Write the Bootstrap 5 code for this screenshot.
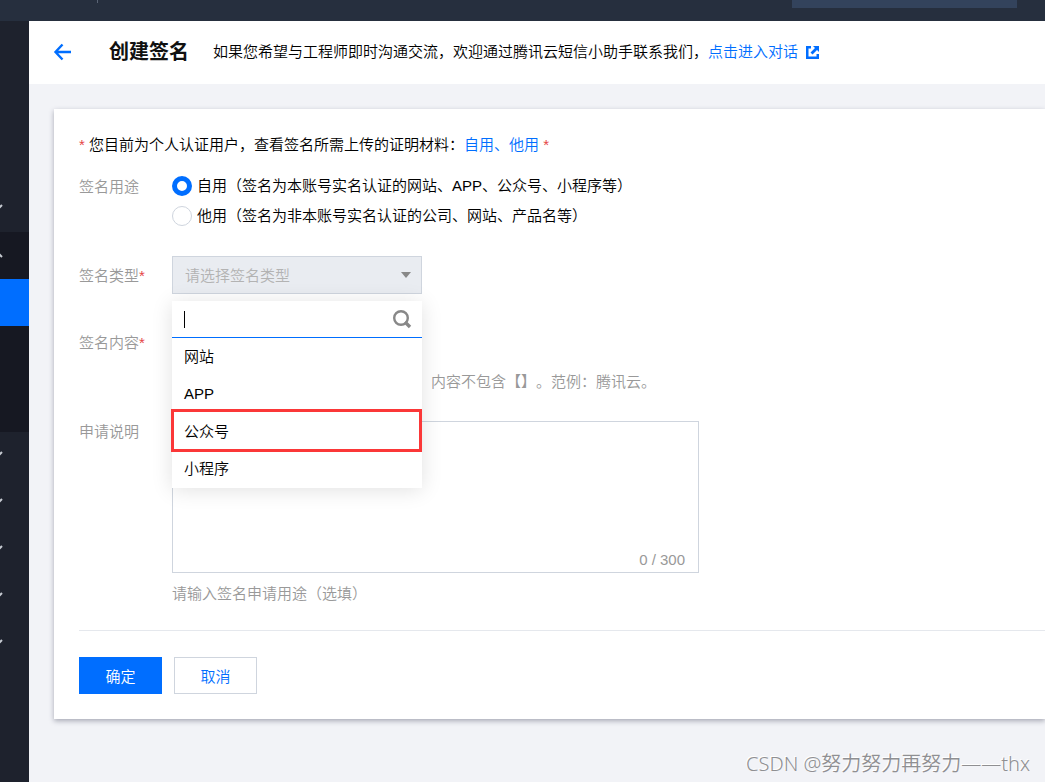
<!DOCTYPE html>
<html lang="zh-CN">
<head>
<meta charset="utf-8">
<meta name="viewport" content="width=device-width, initial-scale=1">
<title>创建签名</title>
<link href="https://cdn.jsdelivr.net/npm/bootstrap@5.3.0/dist/css/bootstrap.min.css" rel="stylesheet">
<style>
  :root { --brand: #006eff; --line: #cfd5de; --hint: #999; }
  body { font: 350 15px/22px "Liberation Sans", "Noto Sans CJK SC", sans-serif; color: #000; background: #f2f3f7; text-spacing-trim: space-all; }
  a { color: var(--brand); text-decoration: none; }
  .topbar { height: 21px; background: #262f3e; padding-right: 28px; }
  .topbar-sep { width: 1px; height: 3px; margin-left: 97px; background: #5a6475; }
  .topbar-search { width: 225px; height: 8px; background: #33435c; }
  .rail { width: 29px; padding-top: 164px; background: #1e222d; }
  .rail-item { display: block; height: 47px; line-height: 0; padding-top: 18px; }
  .rail-open { background: #161822; height: 200px; }
  .rail-open .rail-current { background: var(--brand); }
  .page-head { height: 63px; background: #fff; padding: 0 0 1px 24px; }
  .page-head h1 { font-size: 20px; line-height: 28px; font-weight: 700; margin: 0 24px 0 36px; color: #111; }
  .panel { margin: 25px 0 0 25px; padding: 25px 0 25px 25px; background: #fff; box-shadow: 0 2px 5px rgba(54, 58, 80, .4); }
  .req { color: #e54545; }
  .field { display: flex; }
  .field-gap { margin-top: 29px; }
  .field-gap-sm { margin-top: 15px; }
  .field-gap-md { margin-top: 25px; }
  .field-name { width: 93px; flex: none; color: var(--hint); }
  .field-name.beside-box { padding-top: 9px; }
  .field-name.beside-pick { padding-top: 5px; }
  .pick { height: 30px; gap: 5px; }
  .pick input { appearance: none; width: 20px; height: 20px; margin: 0; border: 1px solid var(--line); border-radius: 50%; background: #fff; }
  .pick input:checked { border: 5px solid var(--brand); }
  .ctl { width: 250px; height: 38px; font: inherit; border: 1px solid var(--line); border-radius: 0; padding: 1px 12px 0; display: block; }
  select.ctl { appearance: none; background: #e9ecf1; color: #b3b3b3; opacity: 1; }
  .arrow { right: 10px; top: 15px; }
  .menu { position: absolute; z-index: 5; top: 45px; left: 0; width: 250px; background: #fff; box-shadow: 0 2px 20px rgba(0, 0, 0, .12); }
  .menu-search { height: 37px; border-bottom: 1px solid var(--brand); padding: 0 10px 0 12px; }
  .menu-search input { border: 0; outline: 0; min-width: 0; height: 34px; padding: 0; caret-color: transparent; background: none; }
  .caret-bar { width: 1px; height: 17px; background: #000; }
  .menu-list { height: 150px; }
  .menu-list button { flex: 1; border: 0; background: none; text-align: left; padding: 0 12px; font: inherit; color: #000; position: relative; }
  .menu-list .picked::after { content: ""; position: absolute; inset: -4px 0 -1px -1px; border: 3px solid #fb3738; }
  .hint { color: var(--hint); margin: 10px 0 0; }
  .hint.past-menu { padding-left: 259px; margin-bottom: -1px; }
  .memo { width: 527px; max-width: 100%; }
  .memo textarea { display: block; width: 100%; height: 152px; resize: none; border: 1px solid var(--line); padding: 8px 12px; }
  .memo-count { position: absolute; right: 14px; bottom: 2px; color: var(--hint); }
  .actions { margin-top: 25px; border-top: 1px solid #e5e8ed; padding-top: 26px; gap: 12px; }
  .actions .btn { width: 83px; height: 37px; padding: 2px 0 0; border-radius: 0; font: inherit; }
  .actions .btn-ok { background: var(--brand); color: #fff; border: 1px solid var(--brand); }
  .actions .btn-no { background: #fff; color: var(--brand); border: 1px solid var(--line); }
  .stamp { margin: 31px 15px 3px; font-family: "Noto Sans", "Noto Sans CJK SC", sans-serif; font-size: 20px; line-height: 28px; color: #8f8f92; text-shadow: -1px -1px 0 #fff; }
</style>
</head>
<body>
<div class="d-flex flex-column min-vh-100">
  <header class="topbar d-flex justify-content-between align-items-start">
    <div class="topbar-sep"></div>
    <div class="topbar-search"></div>
  </header>
  <div class="d-flex flex-grow-1">
    <nav class="rail flex-shrink-0" aria-label="侧边导航">
      <a class="rail-item" href="#" aria-label="展开"><svg width="4" height="8" viewBox="8 0 4 8"><path d="M2 2l4 4 4-4" fill="none" stroke="#c5c9d0" stroke-width="2"/></svg></a>
      <div class="rail-open">
        <a class="rail-item" href="#" aria-label="收起"><svg width="4" height="8" viewBox="8 0 4 8"><path d="M2 7l4-4 4 4" fill="none" stroke="#c5c9d0" stroke-width="2"/></svg></a>
        <a class="rail-item rail-current" href="#" aria-label="当前页"></a>
      </div>
      <a class="rail-item" href="#" aria-label="展开"><svg width="4" height="8" viewBox="8 0 4 8"><path d="M2 2l4 4 4-4" fill="none" stroke="#c5c9d0" stroke-width="2"/></svg></a>
      <a class="rail-item" href="#" aria-label="展开"><svg width="4" height="8" viewBox="8 0 4 8"><path d="M2 2l4 4 4-4" fill="none" stroke="#c5c9d0" stroke-width="2"/></svg></a>
      <a class="rail-item" href="#" aria-label="展开"><svg width="4" height="8" viewBox="8 0 4 8"><path d="M2 2l4 4 4-4" fill="none" stroke="#c5c9d0" stroke-width="2"/></svg></a>
      <a class="rail-item" href="#" aria-label="展开"><svg width="4" height="8" viewBox="8 0 4 8"><path d="M2 2l4 4 4-4" fill="none" stroke="#c5c9d0" stroke-width="2"/></svg></a>
      <a class="rail-item" href="#" aria-label="展开"><svg width="4" height="8" viewBox="8 0 4 8"><path d="M2 2l4 4 4-4" fill="none" stroke="#c5c9d0" stroke-width="2"/></svg></a>
    </nav>

    <main class="flex-grow-1 d-flex flex-column">
      <div class="page-head d-flex align-items-center">
        <a href="#" class="d-flex" aria-label="返回"><svg width="20" height="18" viewBox="0 0 20 18"><path d="M9.500 1.500L2.500 9l7 7.500M2.500 9H18" fill="none" stroke="#006eff" stroke-width="2.400"/></svg></a>
        <h1>创建签名</h1>
        <div>如果您希望与工程师即时沟通交流，欢迎通过腾讯云短信小助手联系我们，<a href="#">点击进入对话</a></div>
        <a href="#" class="d-flex ms-2" aria-label="新窗口打开"><svg width="13" height="13" viewBox="0 0 13 13"><path d="M5 1.250H1.250v10.500h10.500V8" fill="none" stroke="#006eff" stroke-width="2.500"/><path d="M7 0h6v6l-2-2-4.500 4.500-2-2L9 2z" fill="#006eff"/></svg></a>
      </div>

      <form class="panel">
        <div><span class="req">*</span> 您目前为个人认证用户，查看签名所需上传的证明材料：<a href="#">自用</a><a href="#">、</a><a href="#">他用</a> <span class="req">*</span></div>

        <div class="field field-gap-sm" role="radiogroup" aria-labelledby="use">
          <div class="field-name beside-pick" id="use">签名用途</div>
          <div>
            <label class="pick d-flex align-items-center"><input type="radio" name="use" checked>自用（签名为本账号实名认证的网站、APP、公众号、小程序等）</label>
            <label class="pick d-flex align-items-center"><input type="radio" name="use">他用（签名为非本账号实名认证的公司、网站、产品名等）</label>
          </div>
        </div>

        <div class="field field-gap-md">
          <label class="field-name beside-box" for="kind">签名类型<span class="req">*</span></label>
          <div class="position-relative">
            <select class="ctl" id="kind" disabled><option>请选择签名类型</option></select>
            <svg class="arrow position-absolute" width="12" height="8" viewBox="0 0 12 8"><path d="M1 1h10L6 7z" fill="#888"/></svg>
            <div class="menu">
              <div class="menu-search d-flex align-items-center">
                <span class="caret-bar"></span>
                <input class="flex-grow-1" type="text" aria-label="搜索">
                <svg width="20" height="20" viewBox="0 0 20 20" fill="none" stroke="#888"><circle cx="9" cy="9" r="6.800" stroke-width="2.400"/><path d="M13 13l5 5" stroke-width="3.400"/></svg>
              </div>
              <div class="menu-list d-flex flex-column">
                <button type="button">网站</button>
                <button type="button">APP</button>
                <button type="button" class="picked">公众号</button>
                <button type="button">小程序</button>
              </div>
            </div>
          </div>
        </div>

        <div class="field field-gap">
          <label class="field-name beside-box" for="content">签名内容<span class="req">*</span></label>
          <div>
            <input class="ctl" id="content" type="text">
            <p class="hint past-menu">内容不包含【】。范例：腾讯云。</p>
          </div>
        </div>

        <div class="field field-gap">
          <label class="field-name" for="memo">申请说明</label>
          <div class="flex-grow-1">
            <div class="memo position-relative">
              <textarea id="memo"></textarea>
              <span class="memo-count">0 / 300</span>
            </div>
            <p class="hint">请输入签名申请用途（选填）</p>
          </div>
        </div>

        <div class="actions d-flex">
          <button type="submit" class="btn btn-ok">确定</button>
          <button type="button" class="btn btn-no">取消</button>
        </div>
      </form>

      <div class="stamp text-end">CSDN @努力努力再努力——thx</div>
    </main>
  </div>
</div>
<script src="https://cdn.jsdelivr.net/npm/bootstrap@5.3.0/dist/js/bootstrap.bundle.min.js"></script>
</body>
</html>
